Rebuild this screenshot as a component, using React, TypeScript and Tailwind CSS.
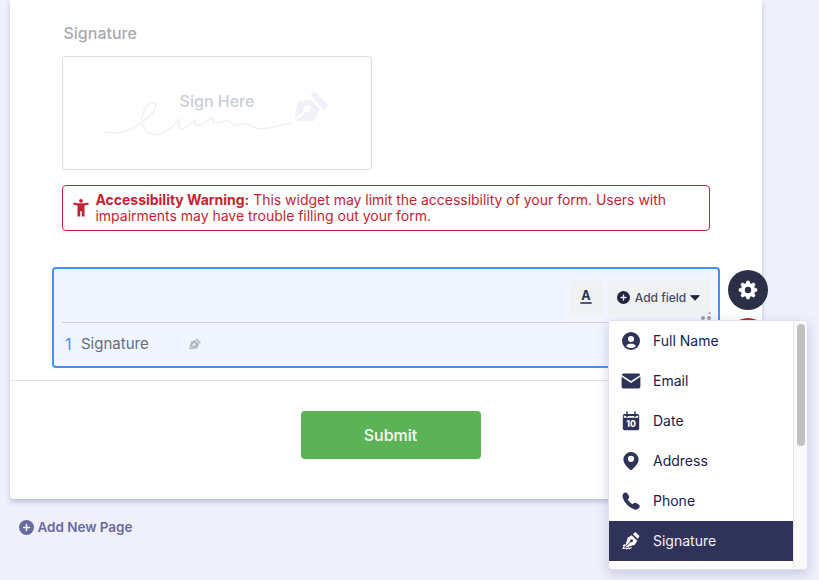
import React from "react";

type IconProps = { className?: string };

function PlusCircleIcon({ className }: IconProps) {
  return (
    <svg viewBox="0 0 14 14" className={className}>
      <circle cx="7" cy="7" r="7" fill="currentColor" />
      <path d="M7 4.300v5.400M4.300 7h5.400" stroke="white" strokeOpacity="0.9" strokeWidth="1.500" strokeLinecap="round" />
    </svg>
  );
}

function UserIcon() {
  return (
    <svg viewBox="0 0 18 18" className="size-[18px]">
      <circle cx="9" cy="9" r="9" fill="currentColor" />
      <circle cx="9" cy="7" r="3" fill="white" />
      <path d="M4.200 14.200C5 12.300 6.800 11.700 9 11.700s4 .6 4.800 2.500C12.500 15.500 10.900 16 9 16s-3.500-.5-4.800-1.800Z" fill="white" />
    </svg>
  );
}

function MailIcon() {
  return (
    <svg viewBox="0 0 20 16" className="h-4 w-5" fill="currentColor">
      <path d="M2.500.5h15A1.800 1.800 0 0 1 19.300 2L10 8 .7 2A1.800 1.800 0 0 1 2.500.5Z" />
      <path d="M.6 3.800 10 9.900l9.400-6.100v9.900a1.800 1.800 0 0 1-1.800 1.800H2.400a1.800 1.800 0 0 1-1.800-1.800Z" />
    </svg>
  );
}

function DateIcon() {
  return (
    <svg viewBox="0 0 18 20" className="h-5 w-[18px]">
      <path d="M2.500 3h13A1.700 1.700 0 0 1 17.200 4.700V17.500a1.700 1.700 0 0 1-1.700 1.700h-13A1.700 1.700 0 0 1 .8 17.500V4.700A1.700 1.700 0 0 1 2.500 3Z" fill="currentColor" />
      <path d="M1.800 4.600h14.400v2.200H1.800Z" fill="white" />
      <path d="M5 1v4.600M13 1v4.600" stroke="currentColor" strokeWidth="1.500" strokeLinecap="round" />
      <path d="M2.500 4.200h13" stroke="currentColor" strokeWidth="1.400" />
      <text x="9" y="16.100" textAnchor="middle" fontSize="8.500" fontWeight="800" fill="white" fontFamily="Inter, sans-serif">10</text>
    </svg>
  );
}

function PinIcon() {
  return (
    <svg viewBox="0 0 16 18" className="h-[18px] w-4">
      <path fillRule="evenodd" fill="currentColor" d="M8 0a7.600 7.600 0 0 1 7.600 7.500C15.600 11.500 11.500 15.500 8.900 17.700a1.400 1.400 0 0 1-1.800 0C4.500 15.500.4 11.500.4 7.500A7.600 7.600 0 0 1 8 0Zm0 3.700a3.100 3.100 0 1 0 0 6.200 3.100 3.100 0 0 0 0-6.200Z" />
    </svg>
  );
}

function PhoneIcon() {
  return (
    <svg viewBox="0 0 18 18" className="size-[18px]" fill="currentColor">
      <path d="M1.900 1.100C3 .2 4.700.4 5.500 1.600l1.300 2.100c.7 1 .5 2.300-.4 3.100l-.6.6c1 1.900 2.700 3.700 4.900 4.800l.6-.6c.9-.9 2.200-1 3.200-.4l2.200 1.400c1.200.8 1.400 2.400.4 3.400l-.6.6c-1 1-2.500 1.300-3.900.8C6.800 15.400 2.500 11.100.7 5.600.3 4.300.4 2.600 1.500 1.500Z" />
    </svg>
  );
}

function SignatureIcon() {
  return (
    <svg viewBox="0 0 18 18" className="size-[18px]">
      <path d="M9.700 3.300 15.300 8.700 12.800 12.800 4.700 15.200 3.300 14 5.700 5.800Z" fill="white" />
      <path d="m11 2.200 1.600-1.600a1 1 0 0 1 1.400 0l3 3a1 1 0 0 1 0 1.400l-1.300 1.800Z" fill="white" />
      <path d="M4 14.300 9 9.300" stroke="#2f3359" strokeWidth="1" />
      <circle cx="9.500" cy="8.800" r="1.500" fill="#2f3359" />
      <path d="M1.300 13.500 3 12.800 1 16.500l3-.5.6 1 1.900-1.200.9 1 1.800-1.100" fill="none" stroke="white" strokeWidth="1.100" strokeLinecap="round" strokeLinejoin="round" />
    </svg>
  );
}

function GearIcon() {
  return (
    <svg viewBox="-10 -10 20 20" className="size-5 text-white">
      <circle r="5.100" fill="none" stroke="currentColor" strokeWidth="3.800" />
      {[0, 45, 90, 135, 180, 225, 270, 315].map((angle) => (
        <path key={angle} d="M-2.400-6.200-1.300-9.300h2.600L2.400-6.200Z" fill="currentColor" transform={`rotate(${angle})`} />
      ))}
    </svg>
  );
}

function AccessibilityIcon() {
  return (
    <svg viewBox="0 0 16 20" className="h-5 w-4 shrink-0" fill="currentColor">
      <circle cx="8" cy="2.800" r="1.900" />
      <path d="M.6 4.400 5 5.200h6l4.400-.8.300 2.100-4.200 1.100v11H8.800v-5.300H7.200v5.300H4.500v-11L.3 6.500Z" />
    </svg>
  );
}

function PenScribble() {
  return (
    <svg viewBox="0 0 226 46" className="absolute left-10 top-[34px] h-[46px] w-[226px] text-[#f0f1f8]">
      <path
        d="M0 41C18 45 31 38 42 29 51 22 55 15 52 12.500 46 9 39 20 39 29c0 9 6 15 14 15 10-.5 19-11 23-15.500 .5 3-1 7 2 9.500 4 1 9-5 14-9-.5 3-.5 5 1 5.500 6 0 11-5.500 16-8.500 2 2 0 6 3 6.500 4 .5 10-5 15-2 2 1 3 4 6 4 4 0 8-4 13-1 4 3 9 5 16 4 9-1 17-4 27-5.500"
        fill="none"
        stroke="currentColor"
        strokeWidth="1.700"
        strokeLinecap="round"
      />
      <path d="m207 8 10 10-6 12h-19l11-9a3.700 3.700 0 1 0-2-2l-10 10 4-18Z" fill="currentColor" />
      <path d="m207.500 4 4-4 14 15-4.500 4.500Z" fill="currentColor" />
    </svg>
  );
}

const fields = [
  { label: "Full Name", icon: <UserIcon /> },
  { label: "Email", icon: <MailIcon /> },
  { label: "Date", icon: <DateIcon /> },
  { label: "Address", icon: <PinIcon /> },
  { label: "Phone", icon: <PhoneIcon /> },
  { label: "Signature", icon: <SignatureIcon />, active: true },
];

function FieldMenu() {
  return (
    <div className="absolute left-[608px] top-[320px] z-20 flex h-[250px] w-[200px] overflow-hidden rounded border border-[#e0e0f0] bg-white shadow-[0_4px_12px_rgba(60,60,120,0.22)]">
      <ul className="w-[184px] shrink-0">
        {fields.map(({ label, icon, active }) => (
          <li
            key={label}
            className={
              active
                ? "flex h-10 items-center bg-[#2f3359] text-[14px] text-[#f0f1fa]"
                : "flex h-10 items-center text-[14px] text-[#191b4b]"
            }
          >
            <span className={active ? "flex w-11 justify-center text-white" : "flex w-11 justify-center text-[#2f3359]"}>{icon}</span>
            <span className="pb-0.5">{label}</span>
          </li>
        ))}
      </ul>
      <div className="flex-1 border-l border-[#e6e6e9] bg-[#fafafa] pl-[3px] pt-[3px]">
        <div className="h-[122px] w-2 rounded-full bg-[#c1c1c1]" />
      </div>
    </div>
  );
}

function SignatureWidget() {
  return (
    <div className="relative mt-[11px] h-[114px] w-[310px] rounded border border-[#dcdde2]">
      <PenScribble />
      <p className="relative pt-8 text-center text-base font-medium leading-6 text-[#c9cdd8]">Sign Here</p>
    </div>
  );
}

function AccessibilityWarning() {
  return (
    <div className="mt-[15px] flex h-[46px] w-[648px] items-center rounded border border-[#c32433] pl-2.5 text-[#c32433]">
      <AccessibilityIcon />
      <p className="ml-[6.500px] text-[14px] leading-4 tracking-[-0.02px]">
        <strong className="font-bold">Accessibility Warning:</strong> This widget may limit the accessibility of your form. Users with
        <br />
        impairments may have trouble filling out your form.
      </p>
    </div>
  );
}

function ConfigurableRow() {
  return (
    <div className="relative -ml-2.5 mt-9 h-[101px] w-[668px] rounded border-2 border-[#468fff] bg-[#f0f5ff] px-2">
      <div className="flex h-[54px] items-center justify-end gap-1 border-b border-[#cfd0d3] pt-1">
        <button className="flex h-[34px] w-[34px] flex-col items-center justify-center rounded-[3px] bg-[#f0f1f3] text-[12.500px] font-bold leading-[10px] text-[#2c3048]">
          A
          <span className="mt-px h-0.5 w-3 rounded-full bg-[#54586e]" />
        </button>
        <button className="flex h-[34px] w-[103px] items-center justify-center rounded-[3px] bg-[#f0f1f3] text-[12px] font-medium text-[#474b60]">
          <PlusCircleIcon className="mr-[5px] size-[13px] text-[#20233f]" />
          Add field
          <svg viewBox="0 0 10 6" className="ml-1 h-1.5 w-2.5">
            <path d="M.7.7h8.600L5 5.300Z" fill="#20233f" stroke="#20233f" strokeLinejoin="round" />
          </svg>
        </button>
      </div>
      <div className="flex h-[42px] items-center pl-[3px]">
        <span className="w-4 text-base text-[#468fff]">1</span>
        <span className="text-[15px] text-[#686c80]">Signature</span>
        <svg viewBox="0 0 12 12" className="ml-10 size-3 text-[#b3b7c4]">
          <path d="m6 2 4.200 4-2 4.200L1 11.500 0 10.800 2 3.800Z" fill="currentColor" />
          <path d="m6.500 1.300 1.200-1L12 4.600l-1.200 1.200Z" fill="currentColor" />
          <path d="m1 10.500 3.500-3.500" stroke="#f0f5ff" strokeWidth=".8" />
          <circle cx="5" cy="6.500" r="1.200" fill="#f0f5ff" />
        </svg>
      </div>
      <svg viewBox="0 0 10 12" className="absolute right-[7px] top-10 h-3 w-2.5 text-[#9a9eb1]" fill="currentColor">
        <path d="M9.500 2v3H6.500A6 6 0 0 0 9.500 2Z" />
        <circle cx="2" cy="9" r="2" />
        <circle cx="8" cy="9" r="2" />
      </svg>
    </div>
  );
}

function FormCard() {
  return (
    <div className="ml-2.5 h-[499px] w-[752px] rounded-b bg-white shadow-[0_3px_5px_rgba(80,85,130,0.3)]">
      <div className="h-[381px] border-b border-[#e3e4ef] pl-[52px] pt-[21px]">
        <h2 className="pl-[1.500px] text-base font-medium leading-6 text-[#a9aab0]">Signature</h2>
        <SignatureWidget />
        <AccessibilityWarning />
        <ConfigurableRow />
      </div>
      <button className="ml-[291px] mt-[30px] h-12 w-[180px] rounded bg-[#5cb355] pr-px text-base font-medium text-[#f7fcf7]">Submit</button>
    </div>
  );
}

export default function App() {
  return (
    <div className="relative h-[580px] w-[819px] overflow-hidden bg-[#f0f0fc] font-['Inter',sans-serif]">
      <FormCard />
      <button className="ml-[18.500px] mt-[18px] flex items-center text-[13.500px] font-semibold leading-5 tracking-[-0.04px] text-[#676ba0]">
        <PlusCircleIcon className="mr-1 size-[15px]" />
        Add New Page
      </button>
      <button className="absolute left-[728px] top-[270px] flex size-10 items-center justify-center rounded-full bg-[#2c3046]">
        <GearIcon />
      </button>
      <button aria-label="Delete" className="absolute left-[728px] top-[318px] size-10 rounded-full bg-[#c32028]" />
      <FieldMenu />
    </div>
  );
}
